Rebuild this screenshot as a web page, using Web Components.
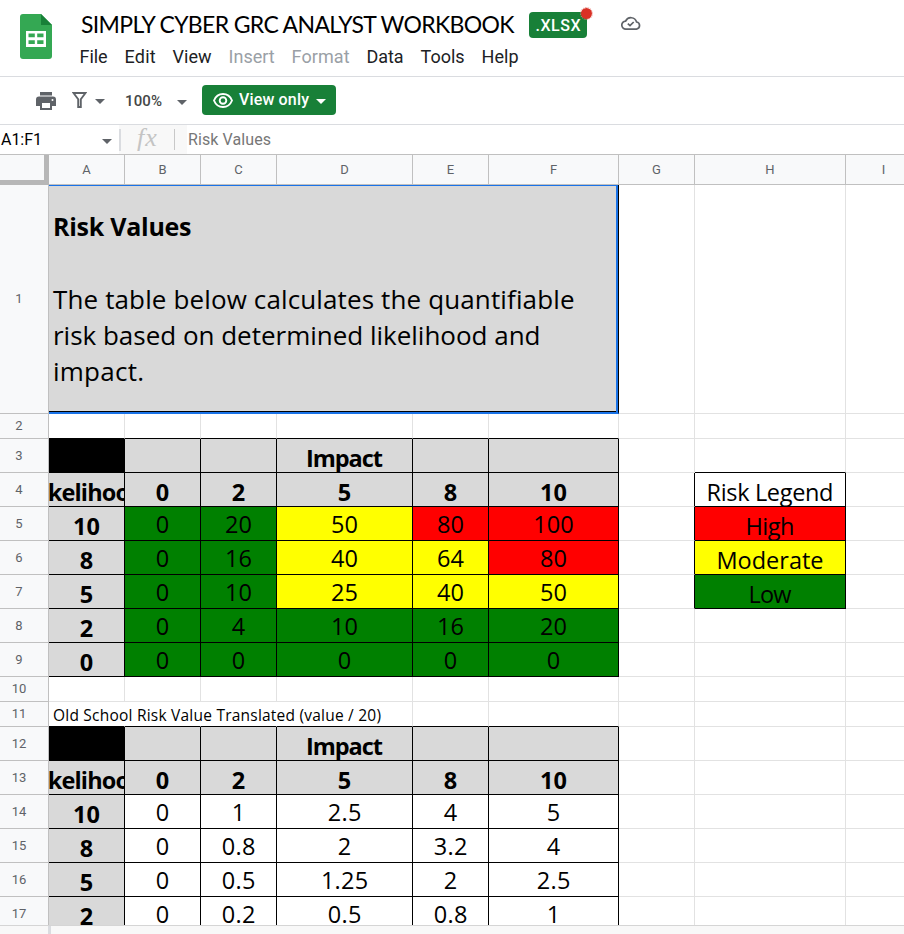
<!DOCTYPE html>
<html lang="en">
<head>
<meta charset="utf-8">
<title>Simply Cyber GRC Analyst Workbook</title>
<style>
html,body{margin:0;height:100%;overflow:hidden;background:#fff}
body{font-family:Roboto,"Liberation Sans",sans-serif;color:#202124}
</style>
</head>
<body>
<workbook-app></workbook-app>
<script>
class Base extends HTMLElement{
  render(html){ if(!this.shadowRoot){this.attachShadow({mode:'open'});} this.shadowRoot.innerHTML=html; }
}

/* Text run spaced to occupy a given width */
customElements.define('fit-text',class extends Base{
  connectedCallback(){
    this.render(`<style>:host{display:inline-block;white-space:pre}span{display:inline-block}</style><span><slot></slot></span>`);
    const s=this.shadowRoot.querySelector('span'), w=+this.getAttribute('w');
    const n=this.textContent.length;
    if(w&&n>1){
      const d=(w-s.getBoundingClientRect().width)/(n-1);
      s.style.letterSpacing=d+'px';
      s.style.marginRight=-d+'px';
    }
  }
});

customElements.define('doc-header',class extends Base{
  connectedCallback(){this.render(`<style>
  :host{display:flex;height:76px;border-bottom:1px solid #dadce0;box-sizing:content-box}
  .logo{margin:14px 0 0 20px;width:32px;height:45px;flex:none}
  .main{margin-left:28px;flex:1}
  .top{display:flex;align-items:flex-start;height:44px}
  h1{margin:9px 0 0 1px;width:448px;font:400 23px/30px Lato,sans-serif;color:#000}
  .badge{position:relative;margin-top:12px;width:58px;height:26px;border-radius:4px;background:#188038;color:#fff;font:500 16px/27px Roboto,sans-serif;text-align:center}
  .dot{position:absolute;left:52px;top:-4px;width:11px;height:11px;border-radius:50%;background:#d93025;outline:1px dotted #e88b85;outline-offset:0}
  .cloud{margin:16px 0 0 34px;width:20px;height:14px}
  nav{display:flex;font-size:18px;line-height:26px;margin-left:-.4px}
  nav fit-text{margin-right:17px}
  .off{color:#9aa0a6}
  </style>
  <svg class="logo" viewBox="0 0 32 45"><path d="M3 0h18l11 11v31a3 3 0 0 1-3 3H3a3 3 0 0 1-3-3V3a3 3 0 0 1 3-3z" fill="#34a853"/><path d="M21 0l11 11H21z" fill="#188038"/><path fill="#fff" fill-rule="evenodd" d="M6 17h20v16H6zM8.500 19.500v3.800h6.300v-3.800zm8.700 0v3.800h6.300v-3.800zM8.500 26.300v3.800h6.300v-3.800zm8.700 0v3.800h6.300v-3.800z"/></svg>
  <div class="main">
    <div class="top"><h1><fit-text w="433.500">SIMPLY CYBER GRC ANALYST WORKBOOK</fit-text></h1>
      <div class="badge"><fit-text w="45">.XLSX</fit-text><i class="dot"></i></div>
      <svg class="cloud" viewBox="0 0 20 14" fill="none" stroke="#5f6368" stroke-width="1.7"><path d="M5 13.100a4 4 0 0 1-.4-8A5.900 5.900 0 0 1 15.600 6a3.600 3.600 0 0 1-.1 7.100z"/><path d="M6.800 7.700l2.200 2 3.700-3.700"/></svg>
    </div>
    <nav><fit-text w="28">File</fit-text><fit-text w="31">Edit</fit-text><fit-text w="39">View</fit-text><fit-text class="off" w="46">Insert</fit-text><fit-text class="off" w="58">Format</fit-text><fit-text w="37">Data</fit-text><fit-text w="44">Tools</fit-text><fit-text w="37">Help</fit-text></nav>
  </div>`);}
});

customElements.define('drop-arrow',class extends Base{
  connectedCallback(){this.render(`<style>:host{display:block;width:0;height:0;border:5px solid transparent;border-top-color:currentColor;border-bottom:0;color:#5f6368;flex:none}</style>`);}
});

customElements.define('tool-bar',class extends Base{
  connectedCallback(){this.render(`<style>
  :host{display:flex;height:47px;border-bottom:1px solid #dadce0;align-items:center;color:#444746}
  .print{width:20px;height:18px;margin:1px 0 0 36px}
  .filter{width:15px;height:16px;margin:0 0 1px 16px}
  .a1{margin:2px 0 0 8px}.zoom{margin:1px 0 0 20px;font:500 15px/20px Roboto,sans-serif}
  .a2{margin:3px 0 0 15px}
  .view{display:flex;align-items:center;margin:0 0 1px 15px;width:134px;height:30px;border-radius:4px;background:#188038;color:#fff;font:500 16px/30px Roboto,sans-serif}
  .view svg{width:20px;height:15px;margin:0 6px 0 11px}
  .view drop-arrow{color:#fff;margin:3px 0 0 7px}
  </style>
  <svg class="print" viewBox="0 0 20 18" fill="#5f6368"><path d="M4 0h12v3.500H4zM3 4.500h14a3 3 0 0 1 3 3V14h-4v4H4v-4H0V7.500a3 3 0 0 1 3-3zM6 11v5h8v-5zm10.500-4a1 1 0 1 0 0 2 1 1 0 0 0 0-2z" fill-rule="evenodd"/></svg>
  <svg class="filter" viewBox="0 0 15 16" fill="none" stroke="#5f6368" stroke-width="1.900"><path d="M1.500 1h12L8.800 7.200V15H6.200V7.200z"/></svg>
  <drop-arrow class="a1"></drop-arrow><fit-text class="zoom" w="37">100%</fit-text><drop-arrow class="a2"></drop-arrow>
  <div class="view"><svg viewBox="0 0 20 15"><path d="M10 1C6 1 2.600 3.500 1 7.500 2.600 11.500 6 14 10 14s7.400-2.500 9-6.500C17.400 3.500 14 1 10 1z" fill="none" stroke="#fff" stroke-width="1.900"/><circle cx="10" cy="7.500" r="3.300" fill="none" stroke="#fff" stroke-width="1.900"/></svg><fit-text w="70">View only</fit-text><drop-arrow></drop-arrow></div>`);}
});

customElements.define('formula-bar',class extends Base{
  connectedCallback(){this.render(`<style>
  :host{display:flex;height:29px;border-bottom:1px solid #c0c0c0;align-items:center;font-size:16px}
  .name{width:119px;display:flex;align-items:center;color:#000}
  .name fit-text{margin-left:1px;flex:1}.name drop-arrow{margin:3px 7px 0 0}
  .fx{display:flex;align-items:center;width:68px;height:29px;background:#f8f8f8;box-sizing:border-box}
  .fx::before{content:"";width:2px;height:22px;background:#dadce0}
  .fx i{font:italic 26px/28px "Liberation Serif",serif;color:#c4c4c4;width:53px;text-align:center;letter-spacing:1px;margin-top:-4px}
  .fx::after{content:"";width:1px;height:21px;background:#c8c8c8}
  .val{color:#777;margin-left:1px}
  </style><div class="name"><fit-text w="41">A1:F1</fit-text><drop-arrow></drop-arrow></div><div class="fx"><i>fx</i></div><fit-text class="val" w="83">Risk Values</fit-text>`);}
});

customElements.define('sheet-cell',class extends Base{
  connectedCallback(){this.render(`<style>
  :host{display:flex;box-sizing:border-box;min-width:0;overflow:hidden;justify-content:center;align-items:flex-start;
    border-right:1px solid #e2e2e2;border-bottom:1px solid #e2e2e2;font:400 23.500px/30px "Open Sans",sans-serif;color:#000;padding-top:2px;white-space:nowrap}
  :host([bg=gray]){background:#d9d9d9}:host([bg=black]){background:#000}
  :host([bg=g]){background:#008000}:host([bg=r]){background:#f00}:host([bg=y]){background:#ff0}
  :host([b~=r]){border-right-color:#000}:host([b~=b]){border-bottom-color:#000}
  :host([b~=n]){border-right-color:transparent}
  :host([bold]){font-weight:700}:host([low]){padding-top:4px}
  :host([note]){font-size:15.500px;line-height:20px;justify-content:flex-start;padding:3px 0 0 4px;overflow:visible}
  :host([kind=col]),:host([kind=row]){font:400 13px/16px Roboto,sans-serif;color:#5f6368;background:#f8f9fa;border-color:#c0c0c0;align-items:center;padding:0}
  :host([kind=row]){padding-right:10px;padding-top:.5px}
  :host([kind=corner]){background:#f8f9fa;border:solid #b7b7b7;border-width:0 5px 5px 0}
  </style><slot></slot>`);}
});

/* Merged A1:F1 cell with its selection outline */
customElements.define('intro-cell',class extends Base{
  connectedCallback(){this.render(`<style>
  :host{display:block;grid-column:span 6;box-sizing:border-box;background:#d9d9d9;border-right:1px solid #000;border-bottom:2px solid #1a73e8;
   box-shadow:inset -2px 0 #1a73e8,inset 0 1px #1a73e8,inset 0 -1px #000;padding:23px 0 0 4px;font:400 26px/36.300px "Open Sans",sans-serif;color:#000}
  div{height:36.300px;white-space:nowrap}.t{font-weight:700;font-size:25px}
  </style><div class="t"><fit-text w="138.500">Risk Values</fit-text></div><div></div><div><fit-text w="521.500">The table below calculates the quantifiable</fit-text></div><div><fit-text w="487.500">risk based on determined likelihood and</fit-text></div><div><fit-text w="91">impact.</fit-text></div>`);}
});

customElements.define('sheet-grid',class extends Base{
  connectedCallback(){
    const cols='ABCDEFGHI'.split('');
    const cell=(a='',t='')=>`<sheet-cell ${a}>${t}</sheet-cell>`;
    const num=t=>{t=String(t);const d=t.includes('.')?t.length-1:t.length;return t.length>1?`<fit-text w="${d*13.500+(t.includes('.')?6.700:0)}">${t}</fit-text>`:t;};
    const legend={4:['','Risk Legend',127],5:['r','High',49],6:['y','Moderate',107],7:['g','Low',43]};
    const tail=r=>{
      const l=legend[r];
      const h=l?cell(`low b="r b" bg="${l[0]}"`,`<fit-text w="${l[2]}">${l[1]}</fit-text>`):cell(r===3?'b="b"':'');
      return cell(l?'b="r"':'')+h+cell();
    };
    const blank=(b,n)=>Array.from({length:6},(_,i)=>cell(`b="${b}"`)).join('');
    const rowHead=r=>cell('kind="row"',r);
    const heads=()=>cell('bg="black" b="r b"')+[0,1,2,3,4].map(i=>cell('bg="gray" b="r b" bold low',i===2?'<fit-text w="77">Impact</fit-text>':'')).join('');
    const scale=()=>cell('bg="gray" b="r b" bold low','<fit-text w="115">Likelihood</fit-text>')+[0,2,5,8,10].map(v=>cell('bg="gray" b="r b" bold low',num(v))).join('');
    const data=(k,vals,bg='')=>cell('bg="gray" b="r b" bold low',num(k))+vals.map((v,i)=>cell(`bg="${bg[i]||''}" b="r b"`,num(v))).join('');
    const body={
      1:'<intro-cell></intro-cell>',2:blank('b'),3:heads(),4:scale(),
      5:data(10,[0,20,50,80,100],'ggyrr'),6:data(8,[0,16,40,64,80],'ggyyr'),7:data(5,[0,10,25,40,50],'ggyyy'),
      8:data(2,[0,4,10,16,20],'ggggg'),9:data(0,[0,0,0,0,0],'ggggg'),10:blank(''),
      11:cell('note b="n b"','<fit-text w="328">Old School Risk Value Translated (value / 20)</fit-text>')+cell('b="n b"')+cell('b="n b"')+cell('b="b"')+cell('b="b"')+cell('b="b"'),
      12:heads(),13:scale(),14:data(10,[0,1,2.5,4,5]),15:data(8,[0,.8,2,3.2,4]),16:data(5,[0,.5,1.25,2,2.5]),17:data(2,[0,.2,.5,.8,1])
    };
    let html=cell('kind="corner"')+cols.map(c=>cell('kind="col"',c)).join('');
    for(let r=1;r<=17;r++) html+=rowHead(r)+body[r]+tail(r);
    this.render(`<style>
    :host{display:grid;height:770px;overflow:hidden;
     grid-template-columns:49px 76px 76px 76px 136px 76px 130px 76px 151px 76px;
     grid-template-rows:30px 229px 25px repeat(7,34px) 25px 25px repeat(6,34px)}
    </style>${html}`);
  }
});

customElements.define('sheet-footer',class extends Base{
  connectedCallback(){this.render(`<style>:host{display:flex;height:8px;border-top:1px solid #d5d5d5;background:#f8f8f8}i{width:3px;margin-left:48px;background:#dadce0}</style><i></i>`);}
});

customElements.define('workbook-app',class extends Base{
  connectedCallback(){this.render(`<style>:host{display:flex;flex-direction:column;width:904px;height:934px;overflow:hidden}doc-header,tool-bar,formula-bar,sheet-grid,sheet-footer{flex:none}</style>
  <doc-header></doc-header><tool-bar></tool-bar><formula-bar></formula-bar><sheet-grid></sheet-grid><sheet-footer></sheet-footer>`);}
});
</script>
</body>
</html>
